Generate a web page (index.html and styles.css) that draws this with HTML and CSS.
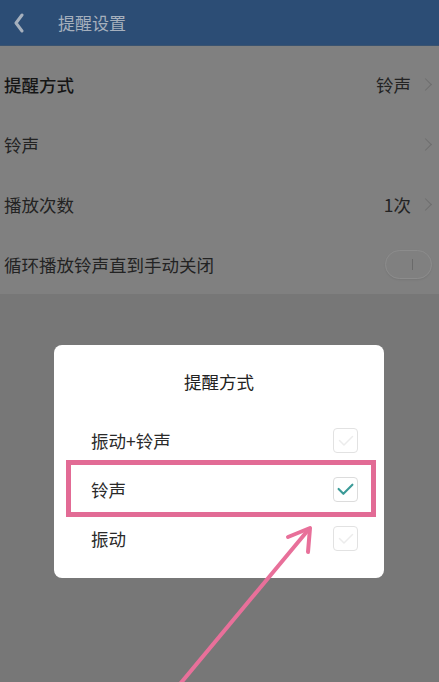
FILE: index.html
```html
<!DOCTYPE html>
<html lang="zh-CN">
<head>
    <meta charset="UTF-8">
    <meta name="viewport" content="width=device-width, initial-scale=1.0">
    <title>提醒设置</title>
    <link rel="stylesheet" href="styles.css">
</head>
<body>
    <div class="screen">
        <div class="header">
            <svg class="back" width="12" height="20" viewBox="0 0 12 20">
                <path d="M9 2 L3 10 L9 18" fill="none" stroke="#a6b0bd" stroke-width="3" stroke-linecap="round" stroke-linejoin="round"/>
            </svg>
            <span class="header-title">提醒设置</span>
        </div>

        <div class="settings">
            <div class="row">
                <span class="label strong">提醒方式</span>
                <span class="value">铃声</span>
                <span class="chev"></span>
            </div>
            <div class="row">
                <span class="label">铃声</span>
                <span class="value"></span>
                <span class="chev"></span>
            </div>
            <div class="row">
                <span class="label">播放次数</span>
                <span class="value">1次</span>
                <span class="chev"></span>
            </div>
            <div class="row">
                <span class="label">循环播放铃声直到手动关闭</span>
                <span class="toggle"><span class="toggle-bar"></span></span>
            </div>
        </div>

        <!-- dialog -->
        <div class="dialog">
            <div class="dialog-title">提醒方式</div>
            <div class="option">
                <span>振动+铃声</span>
                <span class="box">
                    <svg width="16" height="12" viewBox="0 0 16 12">
                        <path d="M1.5 5.5 L6 10 L14.5 1.5" fill="none" stroke="#ececec" stroke-width="1.5" stroke-linecap="round" stroke-linejoin="round"/>
                    </svg>
                </span>
            </div>
            <div class="option">
                <span>铃声</span>
                <span class="box checked">
                    <svg width="17" height="13" viewBox="0 0 16 12">
                        <path d="M1.5 5.5 L6 10 L14.5 1.5" fill="none" stroke="#3b9b98" stroke-width="2" stroke-linecap="round" stroke-linejoin="round"/>
                    </svg>
                </span>
            </div>
            <div class="option">
                <span>振动</span>
                <span class="box">
                    <svg width="16" height="12" viewBox="0 0 16 12">
                        <path d="M1.5 5.5 L6 10 L14.5 1.5" fill="none" stroke="#ececec" stroke-width="1.5" stroke-linecap="round" stroke-linejoin="round"/>
                    </svg>
                </span>
            </div>
        </div>

        <div class="highlight"></div>

        <svg class="arrow" width="439" height="682" viewBox="0 0 439 682">
            <g fill="none" stroke="#e8709a" stroke-width="4" stroke-linecap="round" stroke-linejoin="round">
                <path d="M180 684 L309 529"/>
                <path d="M288 537 L310 528 L308 552"/>
            </g>
        </svg>
    </div>
</body>
</html>
```
FILE: styles.css
```css
body {
    margin: 0;
    font-family: "Noto Sans CJK SC", "Noto Sans", sans-serif;
    background-color: #777777;
}
.screen {
    position: relative;
    width: 439px;
    height: 682px;
    overflow: hidden;
    background-color: #777777;
}
.header {
    height: 46px;
    background-color: #2c4d75;
    display: flex;
    align-items: center;
    border-bottom: 1px solid #3a5370;
    box-sizing: border-box;
}
.header .back {
    margin-left: 13px;
}
.header-title {
    margin-left: 33px;
    font-size: 17px;
    color: #a6b0bd;
}
.settings {
    background-color: #808080;
    padding: 8px 0 0 0;
}
.row {
    height: 60px;
    display: flex;
    align-items: center;
    padding: 0 3px 0 4px;
}
.label {
    flex: 1;
    font-size: 17.5px;
    color: #232323;
}
.label.strong {
    color: #151515;
    font-weight: 500;
}
.value {
    font-size: 17.5px;
    color: #232323;
    margin-right: 10px;
}
.chev {
    width: 8px;
    height: 8px;
    border-top: 1.5px solid #6d6d6d;
    border-right: 1.5px solid #6d6d6d;
    transform: rotate(45deg);
    margin-right: 6px;
}
.toggle {
    width: 47px;
    height: 29px;
    border: 1px solid #8c8c8c;
    border-radius: 15px;
    box-sizing: border-box;
    margin-right: 4px;
    display: flex;
    align-items: center;
    justify-content: center;
    box-shadow: 0 1px 2px rgba(0, 0, 0, 0.08);
}
.toggle-bar {
    width: 1px;
    height: 11px;
    background-color: #6a6a6a;
    margin-left: 8px;
}
/* dialog */
.dialog {
    position: absolute;
    left: 54px;
    top: 345px;
    width: 330px;
    height: 233px;
    background-color: #ffffff;
    border-radius: 8px;
    box-sizing: border-box;
    padding: 22px 26px 0 37px;
}
.dialog-title {
    text-align: center;
    font-size: 17.5px;
    color: #222222;
    margin-left: -11px;
    height: 30px;
    line-height: 30px;
    margin-bottom: 19px;
}
.option {
    height: 49px;
    display: flex;
    align-items: center;
    justify-content: space-between;
    font-size: 17.5px;
    color: #2a2a2a;
}
.box {
    width: 23px;
    height: 23px;
    border: 1px solid #e2e2e2;
    border-radius: 4px;
    display: flex;
    align-items: center;
    justify-content: center;
}
.box.checked {
    border-color: #dcdcdc;
}
.highlight {
    position: absolute;
    left: 66px;
    top: 460px;
    width: 310px;
    height: 57px;
    border: 5px solid #e26b95;
    box-sizing: border-box;
}
.arrow {
    position: absolute;
    left: 0;
    top: 0;
}
```
